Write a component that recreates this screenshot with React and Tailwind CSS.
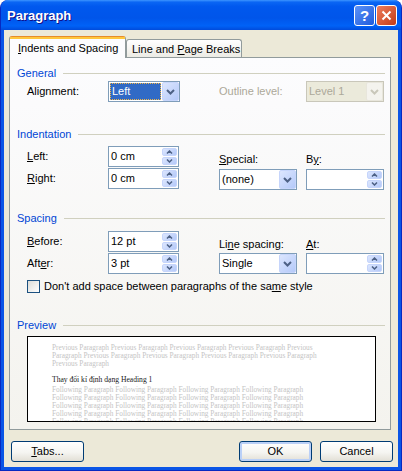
import React from 'react';

// Windows XP "Paragraph" dialog (Word)
const font = "font-['Liberation_Sans',Arial,sans-serif]";

const ComboArrow = ({ color = '#4D6185' }) => (
  <svg width="9" height="6" viewBox="0 0 9 6">
    <path d="M1 1 L4.5 4.5 L8 1" fill="none" stroke={color} strokeWidth="2" />
  </svg>
);

const SpinArrow = ({ up }) => (
  <svg width="7" height="4" viewBox="0 0 7 4">
    <path d={up ? 'M1 3.5 L3.5 1 L6 3.5' : 'M1 0.5 L3.5 3 L6 0.5'} fill="none" stroke="#4D6185" strokeWidth="1.5" />
  </svg>
);

const Combo = ({ value, w, selected, disabled }) => (
  <div
    className={`flex h-[21px] ${w} border ${
      disabled ? 'border-[#C9C7BA] bg-[#EBEADB] text-[#ACA899]' : 'border-[#7F9DB9] bg-white'
    }`}
  >
    <div className="flex-1 flex p-[1px]">
      {selected ? (
        <div className="flex-1 flex items-center pl-[1px] bg-[#316AC5] text-white border border-dotted border-[#F0B548]">
          {value}
        </div>
      ) : (
        <div className="flex-1 flex items-center pl-[1px]">{value}</div>
      )}
    </div>
    <div
      className={`w-[17px] flex items-center justify-center rounded-[2px] border ${
        disabled
          ? 'border-[#E8E6DC] bg-[#F4F3EE]'
          : 'border-[#C6D5FB] bg-[linear-gradient(135deg,#DCE6FE,#B4C9F9)]'
      }`}
    >
      <ComboArrow color={disabled ? '#C9C7BA' : '#4D6185'} />
    </div>
  </div>
);

const Spinner = ({ value, w }) => (
  <div className={`flex h-[21px] ${w} border border-[#7F9DB9] bg-white`}>
    <div className="flex-1 flex items-center pl-[2px]">{value}</div>
    <div className="w-[16px] flex flex-col gap-[1px] py-[1px] pr-[1px]">
      <div className="flex-1 flex items-center justify-center rounded-[2px] border border-[#C6D5FB] bg-[linear-gradient(135deg,#DCE6FE,#B4C9F9)]">
        <SpinArrow up />
      </div>
      <div className="flex-1 flex items-center justify-center rounded-[2px] border border-[#C6D5FB] bg-[linear-gradient(135deg,#DCE6FE,#B4C9F9)]">
        <SpinArrow />
      </div>
    </div>
  </div>
);

const GroupHeader = ({ title, className }) => (
  <div className={`flex items-center h-[13px] pl-[7px] pr-[5px] ${className}`}>
    <span className="text-[#0046D5]">{title}</span>
    <div className="flex-1 h-[1px] ml-[7px] bg-[#D0D0BF]" />
  </div>
);

const Field = ({ label, children, className }) => (
  <div className={`flex items-center h-[21px] ${className}`}>
    <span className="w-[81px]">{label}</span>
    {children}
  </div>
);

const XpButton = ({ children, isDefault }) => (
  <button
    className={`w-[73px] h-[21px] rounded-[3px] border border-[#003C74] flex items-center justify-center bg-[linear-gradient(to_bottom,#FFFFFF_0%,#F5F5F1_55%,#E2DFD5_100%)] ${
      isDefault ? 'shadow-[inset_0_0_0_2px_#BAD0F7]' : ''
    }`}
  >
    {children}
  </button>
);

const U = ({ children }) => <span className="underline underline-offset-[1px]">{children}</span>;

const previousLines = [
  'Previous Paragraph Previous Paragraph Previous Paragraph Previous Paragraph Previous',
  'Paragraph Previous Paragraph Previous Paragraph Previous Paragraph Previous Paragraph',
  'Previous Paragraph',
];
const followingLine = 'Following Paragraph Following Paragraph Following Paragraph Following Paragraph';

export default function App() {
  return (
    <div className={`${font} text-[11px] leading-[13px] text-black w-[402px] h-[471px] flex flex-col rounded-t-[8px] overflow-hidden bg-[#0A55E6] border border-t-0 border-[#0829C1]`}>
      {/* Title bar */}
      <div className="h-[30px] flex items-center justify-between pl-[6px] pr-[4px] bg-[linear-gradient(to_bottom,#3D95FF_0%,#0A66F4_7%,#0058EE_22%,#0055EA_60%,#0062F7_86%,#004BDC_100%)]">
        <span className="text-white font-bold text-[13px] [text-shadow:1px_1px_#0F1089]">Paragraph</span>
        <div className="flex gap-[1px]">
          <div className="w-[21px] h-[21px] rounded-[3px] border border-white bg-[linear-gradient(135deg,#5C92F8,#1E5BDC)] flex items-center justify-center text-white font-bold text-[15px] leading-none">
            ?
          </div>
          <div className="w-[21px] h-[21px] rounded-[3px] border border-white bg-[linear-gradient(135deg,#EE7E5E,#C43B16)] flex items-center justify-center">
            <svg width="11" height="11" viewBox="0 0 11 11">
              <path d="M1.5 1.5 L9.5 9.5 M9.5 1.5 L1.5 9.5" stroke="#fff" strokeWidth="2" />
            </svg>
          </div>
        </div>
      </div>

      {/* Client area */}
      <div className="h-[437px] mx-[3px] bg-[#ECE9D8] flex flex-col">
        {/* Tabs */}
        <div className="mt-[6px] pl-[5px] h-[21px] flex items-start">
          <div className="relative z-10 w-[117px] h-[22px] bg-[#FCFCFE] border-x border-t border-[#919B9C] border-t-[#E68B2C] rounded-t-[3px] flex flex-col">
            <div className="h-[2px] bg-[#FFC73C]" />
            <span className="mt-[3px] pl-[8px]">
              <U>I</U>ndents and Spacing
            </span>
          </div>
          <div className="mt-[3px] w-[116px] h-[18px] border-x border-t border-[#919B9C] rounded-t-[3px] bg-[linear-gradient(to_bottom,#FFFFFF,#ECEBE5)] pl-[5px] pt-[3px]">
            Line and <U>P</U>age Breaks
          </div>
        </div>

        {/* Tab panel */}
        <div className="ml-[5px] w-[382px] h-[373px] border border-[#919B9C] bg-[linear-gradient(to_bottom,#FCFCFE,#F4F3EE)] flex flex-col">
          <GroupHeader title="General" className="mt-[9px]" />
          <div className="mt-[1px] pl-[17px] flex items-center h-[21px]">
            <span className="w-[81px]">Alignment:</span>
            <Combo value="Left" w="w-[72px]" selected />
            <span className="ml-[39px] w-[87px] text-[#ACA899]">Outline level:</span>
            <Combo value="Level 1" w="w-[78px]" disabled />
          </div>

          <GroupHeader title="Indentation" className="mt-[26px]" />
          <div className="pl-[17px] h-[49px] flex items-start">
            <div className="w-[192px] flex flex-col">
              <Field label={<><U>L</U>eft:</>} className="mt-[5px]">
                <Spinner value="0 cm" w="w-[71px]" />
              </Field>
              <Field label={<><U>R</U>ight:</>} className="mt-[1px]">
                <Spinner value="0 cm" w="w-[71px]" />
              </Field>
            </div>
            <div className="w-[87px] flex flex-col">
              <span className="mt-[12px] h-[13px]">
                <U>S</U>pecial:
              </span>
              <div className="mt-[3px]">
                <Combo value="(none)" w="w-[78px]" />
              </div>
            </div>
            <div className="flex flex-col">
              <span className="mt-[12px] h-[13px]">
                B<U>y</U>:
              </span>
              <div className="mt-[3px]">
                <Spinner value="" w="w-[78px]" />
              </div>
            </div>
          </div>

          <GroupHeader title="Spacing" className="mt-[22px]" />
          <div className="pl-[17px] h-[49px] flex items-start">
            <div className="w-[192px] flex flex-col">
              <Field label={<><U>B</U>efore:</>} className="mt-[6px]">
                <Spinner value="12 pt" w="w-[71px]" />
              </Field>
              <Field label={<>Aft<U>e</U>r:</>} className="mt-[1px]">
                <Spinner value="3 pt" w="w-[71px]" />
              </Field>
            </div>
            <div className="w-[87px] flex flex-col">
              <span className="mt-[13px] h-[13px]">
                Li<U>n</U>e spacing:
              </span>
              <div className="mt-[2px]">
                <Combo value="Single" w="w-[78px]" />
              </div>
            </div>
            <div className="flex flex-col">
              <span className="mt-[13px] h-[13px]">
                <U>A</U>t:
              </span>
              <div className="mt-[2px]">
                <Spinner value="" w="w-[78px]" />
              </div>
            </div>
          </div>

          <div className="mt-[6px] pl-[17px] flex items-center h-[13px]">
            <div className="w-[13px] h-[13px] border border-[#1C5180] bg-[linear-gradient(135deg,#DCDCD7,#FFFFFF)]" />
            <span className="ml-[4px]">
              Don't add space between paragraphs of the sa<U>m</U>e style
            </span>
          </div>

          <GroupHeader title="Preview" className="mt-[26px]" />
          <div className="mt-[4px] ml-[17px] w-[349px] h-[86px] border border-black bg-white overflow-hidden pl-[24px] pt-[7px] font-['Liberation_Serif','Times_New_Roman',serif] whitespace-nowrap">
            {previousLines.map((line, i) => (
              <div key={i} className="h-[8px] leading-[8px] text-[7.3px] text-[#C4C4C4]">
                {line}
              </div>
            ))}
            <div className="mt-[8px] h-[8px] leading-[8px] text-[7.6px] text-[#202020]">
              Thay đổi kí định dạng Heading 1
            </div>
            <div className="mt-[2px]">
              {[0, 1, 2, 3, 4].map((i) => (
                <div key={i} className="h-[8px] leading-[8px] text-[7.3px] text-[#C4C4C4]">
                  {followingLine}
                </div>
              ))}
            </div>
          </div>
        </div>

        {/* Bottom buttons */}
        <div className="mt-[11px] pl-[7px] pr-[5px] flex justify-between">
          <XpButton>
            <span>
              <U>T</U>abs...
            </span>
          </XpButton>
          <div className="flex gap-[8px]">
            <XpButton isDefault>OK</XpButton>
            <XpButton>Cancel</XpButton>
          </div>
        </div>
      </div>
    </div>
  );
}
